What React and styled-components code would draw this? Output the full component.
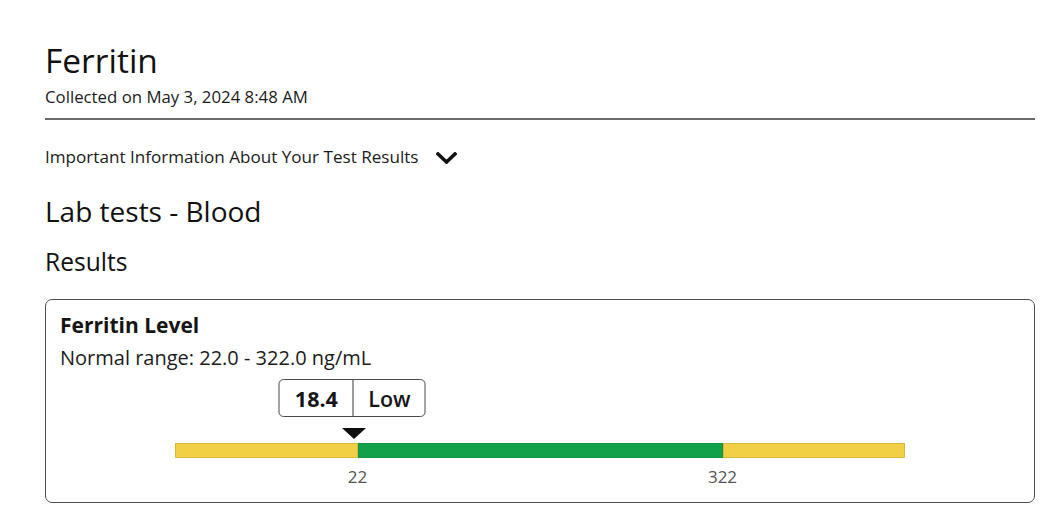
import React from "react";
import styled, { createGlobalStyle } from "styled-components";

const GlobalStyle = createGlobalStyle`
  html, body { margin: 0; padding: 0; background: #fff; }
  body {
    font-family: "Open Sans", "Noto Sans", sans-serif;
    color: #1b1b1b;
    -webkit-font-smoothing: antialiased;
  }
`;

const Page = styled.main`
  width: 990px;
  padding: 40px 0 0 45px;
`;

const Title = styled.h1`
  margin: 0;
  font-size: 33.5px;
  line-height: 40px;
  font-weight: 400;
  color: #111;
`;

const Collected = styled.div`
  margin-top: 6px;
  font-size: 16.8px;
  line-height: 22px;
  color: #1b1b1b;
`;

const Divider = styled.hr`
  margin: 10px 0 0;
  border: 0;
  border-top: 2px solid #6a6a6a;
`;

const Disclosure = styled.button`
  margin-top: 26px;
  padding: 0;
  border: 0;
  background: none;
  display: flex;
  align-items: center;
  gap: 17px;
  font-family: inherit;
  font-size: 17.1px;
  line-height: 22px;
  color: #1b1b1b;
  cursor: pointer;
`;

const Chevron = styled.svg`
  width: 21px;
  height: 12px;
  margin-top: 1px;
`;

const SectionTitle = styled.h2`
  margin: 26px 0 0;
  font-size: 28px;
  line-height: 34px;
  font-weight: 400;
  color: #111;
`;

const SubTitle = styled.h3`
  margin: 19px 0 0;
  font-size: 24.6px;
  line-height: 30px;
  font-weight: 400;
  color: #111;
`;

const Card = styled.section`
  margin-top: 22px;
  border: 1.5px solid #4f4f4f;
  border-radius: 7px;
  padding: 12px 14px 16px;
`;

const CardTitle = styled.div`
  font-size: 21px;
  line-height: 26px;
  font-weight: 700;
  color: #151515;
`;

const RangeText = styled.div`
  margin-top: 7px;
  font-size: 20px;
  line-height: 26px;
  color: #1b1b1b;
`;

const Graph = styled.div`
  position: relative;
  width: 730px;
  margin: 8px auto 0;
  padding-top: 64px;
`;

const ValueBox = styled.div`
  position: absolute;
  top: 0;
  transform: translateX(-50%);
  display: flex;
  border: 1.3px solid #4a4a4a;
  border-radius: 5px;
  height: 38px;
  box-sizing: border-box;
  background: #fff;
`;

const ValueCell = styled.span`
  display: flex;
  align-items: center;
  justify-content: center;
  width: ${(p) => p.$w}px;
  font-size: 21.5px;
  font-weight: ${(p) => p.$weight};
  color: #151515;
  & + & {
    border-left: 1.3px solid #3a3a3a;
  }
`;

const Marker = styled.div`
  position: absolute;
  top: 49px;
  transform: translateX(-50%);
  width: 0;
  height: 0;
  border-left: 12px solid transparent;
  border-right: 12px solid transparent;
  border-top: 11px solid #0d0d0d;
`;

const Bar = styled.div`
  display: flex;
  height: 15px;
`;

const Segment = styled.div`
  flex: ${(p) => p.$flex};
  background: ${(p) => p.$color};
  box-shadow: inset 0 0 0 1px ${(p) => p.$edge};
`;

const Ticks = styled.div`
  position: relative;
  height: 28px;
`;

const Tick = styled.span`
  position: absolute;
  top: 9px;
  transform: translateX(-50%);
  font-size: 17px;
  line-height: 20px;
  color: #555;
`;

const YELLOW = "#f2d046";
const YELLOW_EDGE = "#dcb93a";
const GREEN = "#12a14b";
const GREEN_EDGE = "#0f9745";

export default function App() {
  const markerPct = 24.3;
  return (
    <>
      <GlobalStyle />
      <Page>
        <Title>Ferritin</Title>
        <Collected>Collected on May 3, 2024 8:48 AM</Collected>
        <Divider />
        <Disclosure type="button">
          Important Information About Your Test Results
          <Chevron viewBox="0 0 21 12" aria-hidden="true">
            <path
              d="M2 2 L10.5 10 L19 2"
              fill="none"
              stroke="#111"
              strokeWidth="3.6"
              strokeLinecap="square"
              strokeLinejoin="miter"
            />
          </Chevron>
        </Disclosure>
        <SectionTitle>Lab tests - Blood</SectionTitle>
        <SubTitle>Results</SubTitle>
        <Card>
          <CardTitle>Ferritin Level</CardTitle>
          <RangeText>Normal range: 22.0 - 322.0 ng/mL</RangeText>
          <Graph>
            <ValueBox style={{ left: `${markerPct}%` }}>
              <ValueCell $w={73} $weight={700}>18.4</ValueCell>
              <ValueCell $w={71} $weight={600}>Low</ValueCell>
            </ValueBox>
            <Marker style={{ left: `calc(${markerPct}% + 2px)` }} />
            <Bar>
              <Segment $flex={1} $color={YELLOW} $edge={YELLOW_EDGE} />
              <Segment $flex={2} $color={GREEN} $edge={GREEN_EDGE} />
              <Segment $flex={1} $color={YELLOW} $edge={YELLOW_EDGE} />
            </Bar>
            <Ticks>
              <Tick style={{ left: "25%" }}>22</Tick>
              <Tick style={{ left: "75%" }}>322</Tick>
            </Ticks>
          </Graph>
        </Card>
      </Page>
    </>
  );
}
